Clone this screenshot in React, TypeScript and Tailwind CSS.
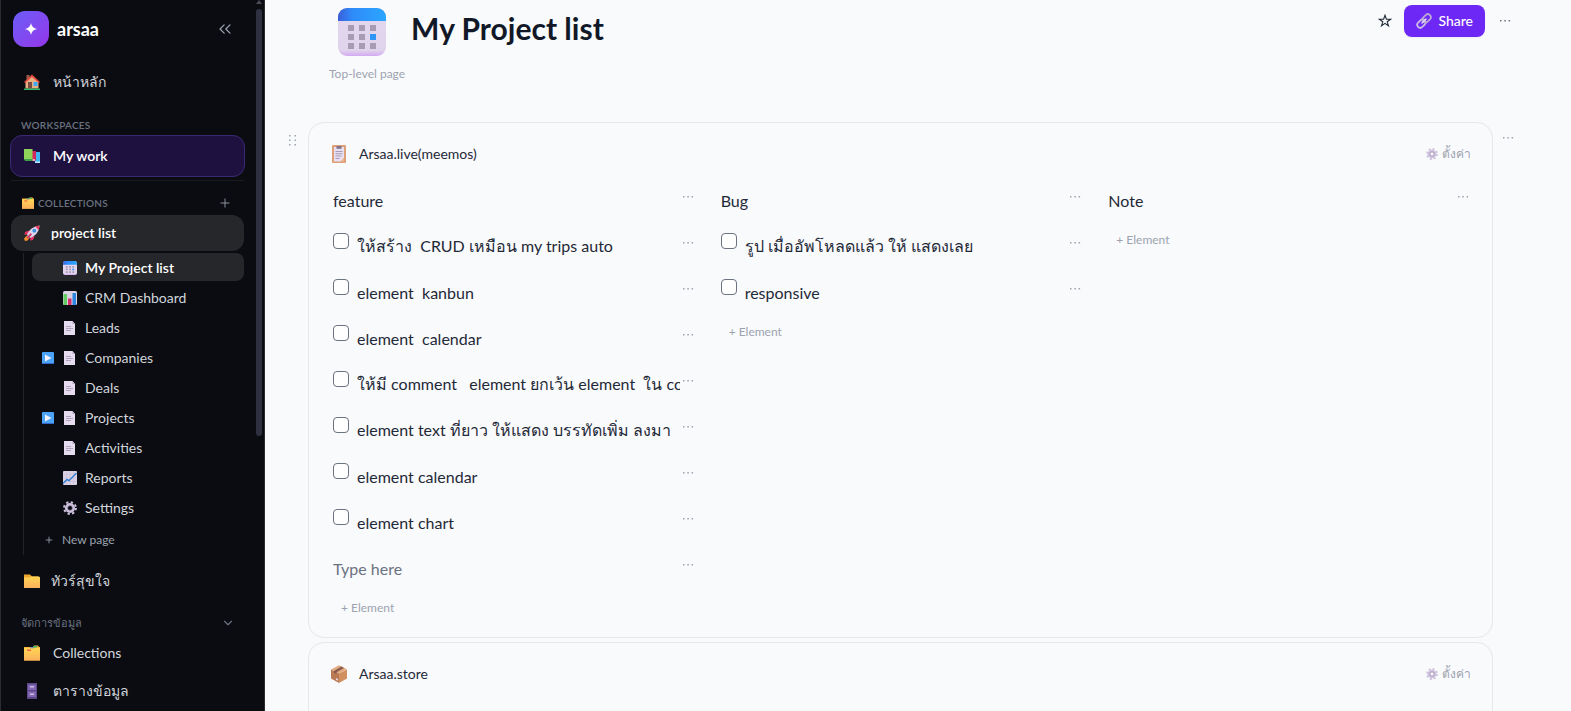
import type { ReactNode } from "react";
import { ChevronDown, ChevronsLeft, Plus } from "lucide-react";

type IconProps = { className?: string };

const CalendarIcon = ({ className = "" }: IconProps) => (
  <svg viewBox="0 0 48 48" className={className} aria-hidden="true">
    <defs>
      <linearGradient id="calTop" x1="0" y1="0" x2="1" y2="0">
        <stop offset="0" stopColor="#3a5fd9" />
        <stop offset="0.3" stopColor="#2f8bfa" />
        <stop offset="1" stopColor="#2ba6ff" />
      </linearGradient>
      <linearGradient id="calBody" x1="0" y1="0" x2="0" y2="1">
        <stop offset="0" stopColor="#e3d8ee" />
        <stop offset="0.88" stopColor="#e0d3ec" />
        <stop offset="1" stopColor="#d3a9f2" />
      </linearGradient>
    </defs>
    <rect width="48" height="48" rx="9" fill="url(#calBody)" />
    <path d="M0 13V9a9 9 0 0 1 9-9h30a9 9 0 0 1 9 9v4z" fill="url(#calTop)" />
    <g fill="#a79bb3">
      <path d="M10 17h6v6h-6zM21 17h6v6h-6zM32 17h6v6h-6zM10 26h6v6h-6zM21 26h6v6h-6zM10 35h6v6h-6zM21 35h6v6h-6zM32 35h6v6h-6z" />
    </g>
    <path d="M32 26h6v6h-6z" fill="#2f96f5" />
  </svg>
);

const HouseIcon = ({ className = "" }: IconProps) => (
  <svg viewBox="0 0 16 16" className={className} aria-hidden="true">
    <path d="M2.5 1h3v5h-3z" fill="#9a5b4b" />
    <path d="M1.5 7 8 1.5 14.500 7v7.500h-13z" fill="#e9b183" />
    <path d="M0 8 8 .5 16 8l-1.200 1L8 3 1.200 9z" fill="#e2483d" />
    <path d="M4 8h4v6.500H4z" fill="#7d4a40" />
    <path d="M9.500 8h4v4h-4z" fill="#3fa9f5" />
    <path d="M0 14.500h16V16H0z" fill="#35b768" />
  </svg>
);

const BooksIcon = ({ className = "" }: IconProps) => (
  <svg viewBox="0 0 16 16" className={className} aria-hidden="true">
    <path d="M10 4h6v11h-5z" fill="#3db4f2" />
    <path d="M11 13.500h5V15h-5z" fill="#bfe6fb" />
    <path d="M6 3h6v9.500H6z" fill="#d4285c" />
    <path d="M4 11h7v2H4z" fill="#f0a0b8" />
    <path d="M0 1h8.500V11H1.500L0 12z" fill="#8fd35a" />
    <path d="M0 11h8.500v2H1z" fill="#3f9c48" />
  </svg>
);

const RocketIcon = ({ className = "" }: IconProps) => (
  <svg viewBox="0 0 16 16" className={className} aria-hidden="true">
    <path d="M5 5.500 1 7 .5 10l4-1zM10.500 11 9 15l-3 .500 1-4z" fill="#e8336a" />
    <path d="M3 10.500 0 13.500 1 16l2.500-.500 2-2.500z" fill="#f7922d" />
    <path d="M3 10C5 5 8.500 1.500 15.500.500 15 7.500 11 11 6 13z" fill="#ddd3ea" />
    <path d="M11 1.500 15.500.500l-.800 4.500z" fill="#ee3a5e" />
    <circle cx="10.300" cy="5.700" r="1.900" fill="#3b8fe0" />
    <path d="m6.500 8-4 5 1.200.800L8 9.500z" fill="#d22f6b" />
  </svg>
);

const BarsIcon = ({ className = "" }: IconProps) => (
  <svg viewBox="0 0 14 14" className={className} aria-hidden="true">
    <rect width="14" height="14" rx="1.500" fill="#dcd2e6" />
    <path d="M.5 3h3.500v11H.5z" fill="#62cb62" />
    <path d="M5 7.500h3.500V14H5z" fill="#d5306a" />
    <path d="M9.500 2H13v12H9.500z" fill="#2d87e0" />
  </svg>
);

const DocIcon = ({ className = "" }: IconProps) => (
  <svg viewBox="0 0 14 14" className={className} aria-hidden="true">
    <path d="M1 0h8.500L12 3v11H1z" fill="#e6dcf0" />
    <path d="M9.500 0 12 3H9.500z" fill="#b9aac8" />
    <path d="M3 5h5v1H3zM3 7h7v1H3zM3 9h5v1H3z" fill="#b1a3bf" />
  </svg>
);

const TrendIcon = ({ className = "" }: IconProps) => (
  <svg viewBox="0 0 14 14" className={className} aria-hidden="true">
    <rect width="14" height="14" rx="1" fill="#dcd2e6" />
    <path d="M0 3.500h14M0 7h14M0 10.500h14M3.500 0v14M7 0v14M10.500 0v14" stroke="#c6bad2" strokeWidth=".500" />
    <path d="M0 12.500 4 8.500l2 1.200L13.500 2" fill="none" stroke="#2f7fd0" strokeWidth="1.400" />
  </svg>
);

const GearIcon = ({ className = "" }: IconProps) => (
  <svg viewBox="0 0 14 14" className={className} aria-hidden="true">
    <circle cx="7" cy="7" r="5.900" fill="none" stroke="#cdc0dc" strokeWidth="2" strokeDasharray="2.320 2.314" />
    <circle cx="7" cy="7" r="3.700" fill="none" stroke="#cdc0dc" strokeWidth="2.700" />
    <circle cx="7" cy="7" r="2.400" fill="none" stroke="#8d7ba3" strokeWidth=".700" />
  </svg>
);

const PlayIcon = ({ className = "" }: IconProps) => (
  <svg viewBox="0 0 12 12" className={className} aria-hidden="true">
    <rect width="12" height="12" rx="1" fill="#4aa3f7" />
    <path d="M0 11h12v1H0z" fill="#3568c8" />
    <path d="m3 2.500 6.500 3.500L3 9.500z" fill="#f4f0fa" />
  </svg>
);

const FolderIcon = ({ className = "" }: IconProps) => (
  <svg viewBox="0 0 16 16" className={className} aria-hidden="true">
    <defs>
      <linearGradient id="folder" x1="0" y1="0" x2="0" y2="1">
        <stop offset="0" stopColor="#ffd553" />
        <stop offset="1" stopColor="#fbb15c" />
      </linearGradient>
    </defs>
    <path d="M0 1.500h6l2 2h6l2 1.500v4H0z" fill="#eba52f" />
    <path d="M0 4.500h5.500L7 3.500h8l1 1V15H0z" fill="url(#folder)" />
  </svg>
);

const DividersIcon = ({ className = "" }: IconProps) => (
  <svg viewBox="0 0 16 16" className={className} aria-hidden="true">
    <path d="M0 2h9l1-1.500h4L15 2h1v13.500H0z" fill="#f4b63b" />
    <path d="M9 1h4v1.500H9z" fill="#35b768" />
    <path d="M0 3h16v12.500H0z" fill="url(#folder)" />
    <path d="M6 2h4v1.300H6z" fill="#7f93a8" />
    <path d="M3 4.500h4V6H3z" fill="#f0614b" />
  </svg>
);

const CabinetIcon = ({ className = "" }: IconProps) => (
  <svg viewBox="0 0 16 16" className={className} aria-hidden="true">
    <path d="M3 0h10v16H3z" fill="#5c4789" />
    <path d="M4 1.500h8V7H4zM4 8.500h8V14H4z" fill="#8268b3" />
    <path d="M6 3h4v1.500H6zM6 10.500h4V12H6z" fill="#cdbce8" />
  </svg>
);

const ClipboardIcon = ({ className = "" }: IconProps) => (
  <svg viewBox="0 0 18 18" className={className} aria-hidden="true">
    <rect x="2" width="14" height="18" rx="1" fill="#dda077" />
    <path d="M4 2h10v11l-3.500 3.500H4z" fill="#e8dff2" />
    <path d="M14 13v3.500h-3.500z" fill="#f0b98d" />
    <path d="M6.500 1h5v2.800h-5z" fill="#7f7289" />
    <path d="M5.500 6h7v1h-7zM5.500 8.300h7v1h-7zM5.500 10.600h6v1h-6zM5.500 13h4v1h-4z" fill="#a79bb5" />
  </svg>
);

const BoxIcon = ({ className = "" }: IconProps) => (
  <svg viewBox="0 0 18 18" className={className} aria-hidden="true">
    <path d="m9 .3 8 4L9 8.500l-8-4z" fill="#e2ac80" />
    <path d="m1 4.500 8 4V18l-8-4.500z" fill="#b97a55" />
    <path d="m17 4.500-8 4V18l8-4.500z" fill="#d1905f" />
    <path d="M11.500 1.600 14 3 6.500 7.200V9L4 7.800V6z" fill="#8a5a4c" />
    <path d="m6 13 2 1.200v1.500l-2-1z" fill="#e9ddf2" />
  </svg>
);

const LinkIcon = ({ className = "" }: IconProps) => (
  <svg viewBox="0 0 14 14" className={className} aria-hidden="true">
    <g fill="none" strokeLinecap="round" transform="rotate(-45 7 7)">
      <rect x="-.3" y="4.400" width="8.100" height="5.200" rx="2.600" stroke="#cbb9e6" strokeWidth="1.600" />
      <rect x="6.200" y="4.400" width="8.100" height="5.200" rx="2.600" stroke="#b9a6d8" strokeWidth="1.600" />
      <path d="M4.500 7h5" stroke="#e2d8f2" strokeWidth="1.300" />
    </g>
  </svg>
);

const Dots = ({ className = "", label = "More" }: { className?: string; label?: string }) => (
  <button type="button" aria-label={label} className={`flex shrink-0 items-center justify-center ${className}`}>
    <svg viewBox="0 0 12 2" className="h-[2px] w-3" fill="currentColor" aria-hidden="true">
      <path d="M1 0h1.500v1.500H1zM5.300 0h1.500v1.500H5.300zM9.600 0h1.500v1.500H9.600z" />
    </svg>
  </button>
);

const pages = [
  { name: "My Project list", icon: CalendarIcon, active: true },
  { name: "CRM Dashboard", icon: BarsIcon },
  { name: "Leads", icon: DocIcon },
  { name: "Companies", icon: DocIcon, nested: true },
  { name: "Deals", icon: DocIcon },
  { name: "Projects", icon: DocIcon, nested: true },
  { name: "Activities", icon: DocIcon },
  { name: "Reports", icon: TrendIcon },
  { name: "Settings", icon: GearIcon },
];

const columns = [
  {
    title: "feature",
    items: [
      "ให้สร้าง  CRUD เหมือน my trips auto",
      "element  kanbun",
      "element  calendar",
      "ให้มี comment   element ยกเว้น element  ใน comment",
      "element text ที่ยาว ให้แสดง บรรทัดเพิ่ม ลงมา",
      "element calendar",
      "element chart",
    ],
    draft: true,
  },
  { title: "Bug", items: ["รูป เมื่ออัพโหลดแล้ว ให้ แสดงเลย", "responsive"] },
  { title: "Note", items: [] },
];

const Sidebar = () => (
  <aside className="relative w-[265px] shrink-0 overflow-hidden border-x border-[#2b2c31] bg-[#0a0c12] pr-[19px] pl-[9px] text-[#d1d5db]">
    <div className="flex items-center pt-[11px] pl-[3px]">
      <div className="flex h-9 w-9 items-center justify-center rounded-xl bg-linear-to-br from-[#6a5cf8] to-[#9333ea]">
        <svg viewBox="0 0 12 12" className="h-3 w-3" fill="#fff" aria-hidden="true">
          <path d="M6 0Q6.800 5.200 12 6 6.800 6.800 6 12 5.200 6.800 0 6 5.200 5.200 6 0z" />
        </svg>
      </div>
      <span className="ml-2 grow text-lg leading-6 font-bold text-white">arsaa</span>
      <button type="button" aria-label="Collapse sidebar" className="mr-2.5 text-[#9ca3af]">
        <ChevronsLeft className="h-5 w-5" strokeWidth={1.5} />
      </button>
    </div>

    <a href="#home" className="mt-4 flex h-[38px] items-center pl-3.5 text-sm font-medium">
      <HouseIcon className="mr-[13px] h-4 w-4" />
      หน้าหลัก
    </a>

    <h2 className="mt-[15px] mb-px flex h-[18px] items-center pl-[11px] text-[10px] font-semibold tracking-wide text-[#6b7280]">
      WORKSPACES
    </h2>
    <a
      href="#work"
      className="flex h-[42px] items-center rounded-xl border border-[#3a2a72] bg-[#1f113f] pl-[13px] text-sm font-semibold text-white"
    >
      <BooksIcon className="mr-[13px] h-4 w-4" />
      My work
    </a>

    <div className="mx-px mt-[3px] flex h-[34px] items-end border-t border-[#191b21] pr-3 pl-[11px]">
      <div className="flex h-[22px] grow items-center">
        <DividersIcon className="mr-1 h-3 w-3" />
        <h2 className="grow text-[10px] font-semibold tracking-wide text-[#6b7280]">COLLECTIONS</h2>
        <button type="button" aria-label="Add collection" className="text-[#9ca3af]">
          <Plus className="h-3.5 w-3.5" strokeWidth={1.5} />
        </button>
      </div>
    </div>
    <a href="#project-list" className="mx-px mt-px flex h-9 items-center rounded-xl bg-[#26272b] pl-[13px] text-sm font-semibold text-white">
      <RocketIcon className="mr-[11px] h-4 w-4" />
      project list
    </a>

    <div className="mt-0.5 mr-px ml-[13px] border-l border-[#22242a] pl-2">
      <ul className="flex flex-col gap-0.5">
        {pages.map(({ name, icon: Icon, active, nested }) => (
          <li key={name}>
            <a
              href="#page"
              className={`flex h-7 items-center rounded-lg pt-0.5 pl-2.5 text-sm ${
                active ? "bg-[#26272b] font-semibold text-white" : ""
              }`}
            >
              <span className="flex w-[21px] shrink-0">{nested && <PlayIcon className="h-3 w-3" />}</span>
              <Icon className="mr-2 h-3.5 w-3.5" />
              {name}
            </a>
          </li>
        ))}
      </ul>
      <button type="button" className="mt-1 flex h-[30px] items-center pl-3 text-xs text-[#9ca3af]">
        <Plus className="mr-2 h-2.5 w-2.5" strokeWidth={2} />
        New page
      </button>
    </div>

    <a href="#tour" className="mt-2 flex h-9 items-center pl-3.5 text-sm font-medium">
      <FolderIcon className="mr-[11px] h-4 w-4" />
      ทัวร์สุขใจ
    </a>

    <div className="mt-[15px] flex h-[18px] items-center pr-2.5 pl-[11px] text-[11px] text-[#6b7280]">
      <h2 className="grow">จัดการข้อมูล</h2>
      <ChevronDown className="h-3.5 w-3.5" />
    </div>
    <a href="#collections" className="mt-0.5 flex h-[38px] items-center pl-3.5 text-sm">
      <DividersIcon className="mr-[13px] h-4 w-4" />
      Collections
    </a>
    <a href="#tables" className="flex h-[38px] items-center pl-3.5 text-sm">
      <CabinetIcon className="mr-[13px] h-4 w-4" />
      ตารางข้อมูล
    </a>

    {/* scroll bar laid over the menu */}
    <div className="absolute inset-y-0 right-0.5 w-1.5" aria-hidden="true">
      <svg viewBox="0 0 6 4" className="h-1 w-1.5" fill="#4b4c5a">
        <path d="M3 0 6 4H0z" />
      </svg>
      <div className="mt-[5px] h-3/5 rounded-full bg-[#2f3040]" />
    </div>
  </aside>
);

const Section = ({ icon, title, children }: { icon: ReactNode; title: string; children?: ReactNode }) => (
  <section className="min-h-40 rounded-2xl border border-[#e5e7eb] px-5 pb-[17px]">
    <header className="flex items-center gap-[11px] pt-[19px] pl-px">
      {icon}
      <h2 className="grow text-sm leading-6 text-[#1f2937]">{title}</h2>
      <button type="button" className="flex items-center gap-1 pr-px text-xs leading-6 text-[#9ca3af]">
        <GearIcon className="h-3 w-3" />
        ตั้งค่า
      </button>
    </header>
    {children}
  </section>
);

const App = () => {
  return (
    <div className="flex h-screen overflow-hidden bg-[#f9fafc] font-[Lato,sans-serif]">
      <Sidebar />

      <main className="min-w-0 grow overflow-hidden pr-[55px] pl-[23px]">
        <header className="flex items-start pr-[3px] pl-[41px]">
          <div>
            <CalendarIcon className="mt-2 ml-[9px] h-12 w-12" />
            <p className="mt-2.5 text-xs leading-4 text-[#9ca3af]">Top-level page</p>
          </div>
          <h1 className="mt-2 ml-1.5 grow text-3xl leading-10 font-bold text-[#111827]">My Project list</h1>
          <div className="flex items-center pt-[5px]">
            <button type="button" aria-label="Favourite" className="flex h-8 items-center text-[#1f2937]">
              <svg viewBox="0 0 14 14" className="mr-3 h-3.5 w-3.5" fill="none" stroke="currentColor" strokeWidth="1.100">
                <path d="M7 1.300 8.400 5.300h4.200L9.200 7.800l1.300 4.100L7 9.400l-3.500 2.500 1.300-4.100L1.400 5.300h4.200z" />
              </svg>
            </button>
            <button type="button" className="flex h-8 items-center gap-1.5 rounded-lg bg-[#6d28f5] px-3 text-sm font-medium text-white shadow-xs">
              <LinkIcon className="h-4 w-4" />
              Share
            </button>
            <Dots className="ml-3 h-8 w-4 text-[#6b7280]" />
          </div>
        </header>

        <div className="mt-10 flex items-start">
          <button type="button" aria-label="Move section" className="mt-3 flex h-3 w-5 shrink-0 items-center pl-px">
            <svg viewBox="0 0 8 12" className="h-3 w-2" fill="#9ca3af" aria-hidden="true">
              <path d="M0 1h1.500v1.500H0zM5.500 1H7v1.500H5.500zM0 5.500h1.500V7H0zM5.500 5.500H7V7H5.500zM0 10h1.500v1.500H0zM5.500 10H7v1.500H5.500z" />
            </svg>
          </button>
          <div className="flex min-w-0 grow flex-col gap-1">
            <Section icon={<ClipboardIcon className="h-[18px] w-[18px]" />} title="Arsaa.live(meemos)">
              <div className="grid grid-cols-3 gap-6 pt-[13px] pl-1">
                {columns.map((column) => (
                  <div key={column.title} className="min-w-0">
                    <div className="flex h-[46px] items-start">
                      <input
                        aria-label="Column name"
                        defaultValue={column.title}
                        className="mt-[5px] h-8 min-w-0 grow bg-transparent text-base text-[#1f2937]"
                      />
                      <Dots className="mt-2 mr-[3px] ml-0.5 h-5 w-3 text-[#9ca3af]" />
                    </div>
                    {column.items.map((item, index) => (
                      <div key={index} className="flex h-[46px] items-start">
                        <input
                          type="checkbox"
                          aria-label={item}
                          className="mt-2 mr-2 h-4 w-4 shrink-0 appearance-none rounded-sm border border-[#6b7280] bg-white"
                        />
                        <input
                          aria-label="Element text"
                          defaultValue={item}
                          className="mt-[5px] h-8 min-w-0 grow bg-transparent text-base text-[#1f2937]"
                        />
                        <Dots className="mt-2 mr-[3px] ml-0.5 h-5 w-3 text-[#9ca3af]" />
                      </div>
                    ))}
                    {column.draft && (
                      <div className="flex h-[46px] items-start">
                        <input
                          aria-label="New element"
                          placeholder="Type here"
                          className="mt-[5px] h-8 min-w-0 grow bg-transparent text-base text-[#1f2937] placeholder:text-[#6b7280]"
                        />
                        <Dots className="mt-2 mr-[3px] ml-0.5 h-5 w-3 text-[#9ca3af]" />
                      </div>
                    )}
                    <button type="button" className="mt-[3px] block px-2 py-1 text-xs leading-4 text-[#9ca3af]">
                      + Element
                    </button>
                  </div>
                ))}
              </div>
            </Section>
            <Section icon={<BoxIcon className="h-[18px] w-[18px]" />} title="Arsaa.store" />
          </div>
          <Dots className="mt-2 ml-[7px] h-4 w-4 text-[#9ca3af]" />
        </div>
      </main>
    </div>
  );
};

export default App;
